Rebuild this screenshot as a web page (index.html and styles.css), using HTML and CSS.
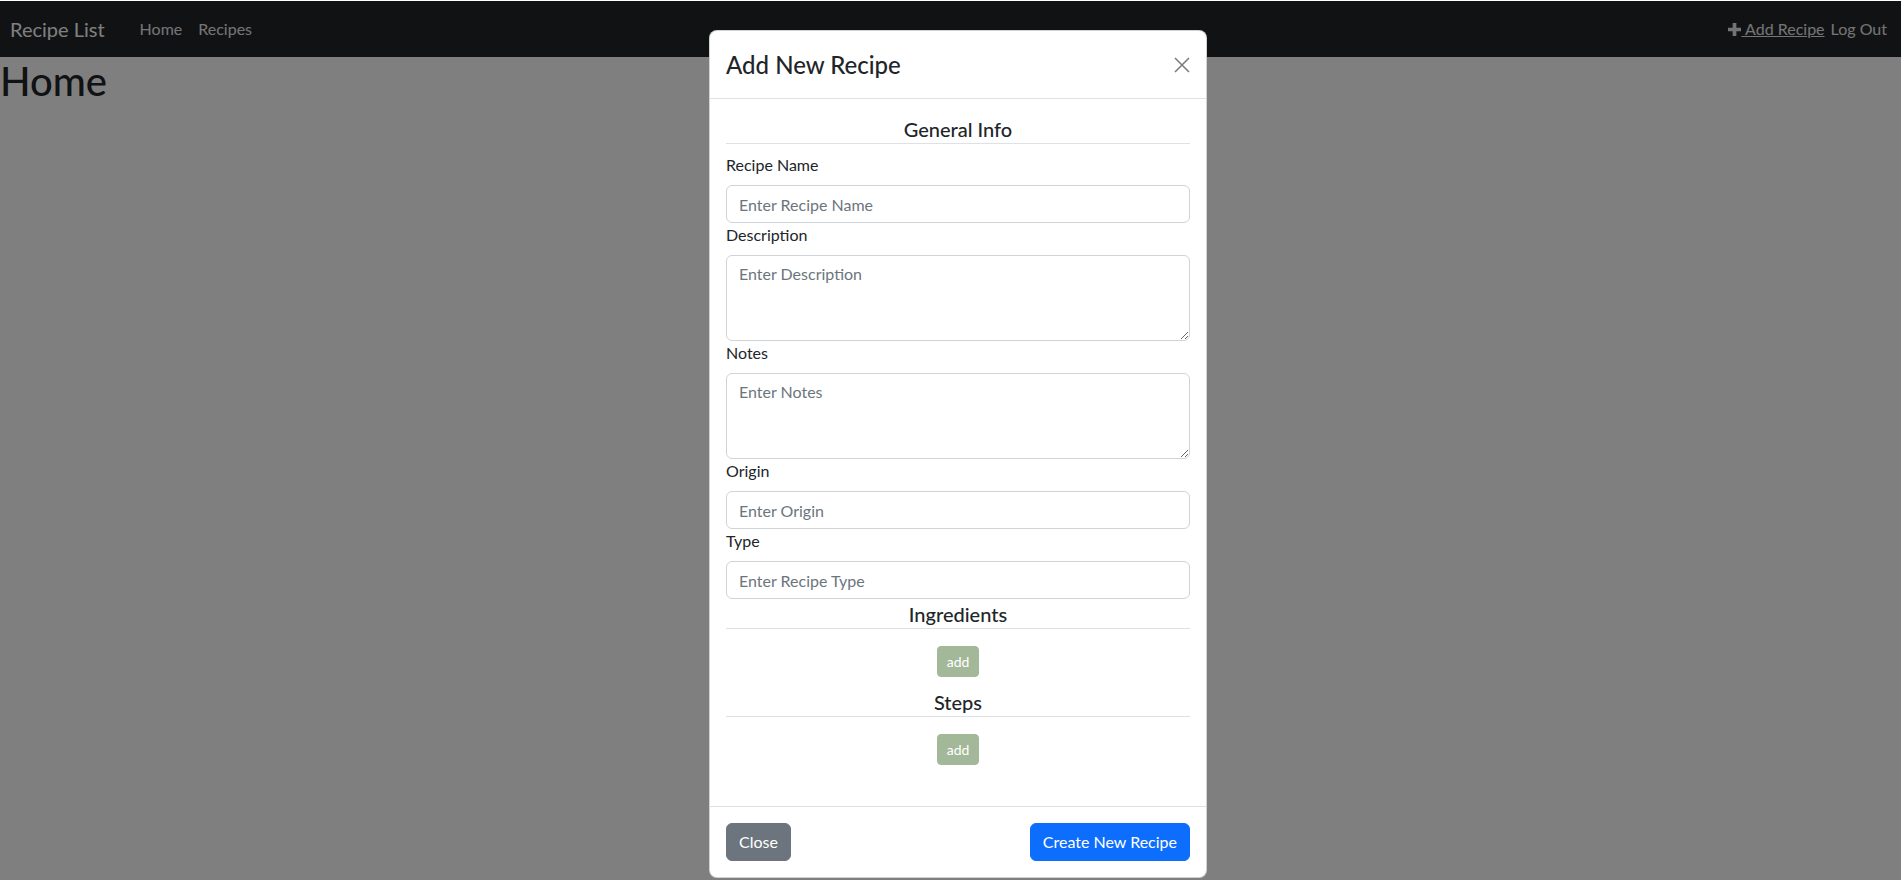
FILE: index.html
```html
<!DOCTYPE html>
<html lang="en">
<head>
<meta charset="utf-8">
<title>Recipe List</title>
<link rel="stylesheet" href="styles.css">
</head>
<body>
<div class="viewport">
  <nav class="navbar">
    <div class="nav-left">
      <a class="brand" href="#">Recipe List</a>
      <ul class="nav-links">
        <li><a class="nav-link" href="#">Home</a></li>
        <li><a class="nav-link" href="#">Recipes</a></li>
      </ul>
    </div>
    <div class="nav-right">
      <a class="add-link" href="#"><svg class="plus" viewBox="0 0 14 14" width="13" height="13"><path d="M5 0h4v5h5v4H9v5H5V9H0V5h5z" fill="currentColor"/></svg> Add Recipe</a>
      <a class="logout" href="#">Log Out</a>
    </div>
  </nav>
  <main class="main">
    <h1 class="page-title">Home</h1>
  </main>

  <div class="backdrop"></div>

  <div class="modal">
    <div class="modal-header">
      <h5 class="modal-title">Add New Recipe</h5>
      <button class="btn-close" type="button" aria-label="Close">
        <svg viewBox="0 0 16 16" width="16" height="16"><path d="M1 1L15 15M15 1L1 15" stroke="currentColor" stroke-width="1.6" fill="none"/></svg>
      </button>
    </div>
    <div class="modal-body">
      <h5 class="section-title first">General Info</h5>
      <label class="form-label">Recipe Name</label>
      <input class="form-control" type="text" placeholder="Enter Recipe Name">
      <label class="form-label">Description</label>
      <textarea class="form-control area" placeholder="Enter Description"></textarea>
      <label class="form-label">Notes</label>
      <textarea class="form-control area" placeholder="Enter Notes"></textarea>
      <label class="form-label">Origin</label>
      <input class="form-control" type="text" placeholder="Enter Origin">
      <label class="form-label">Type</label>
      <input class="form-control last" type="text" placeholder="Enter Recipe Type">

      <h5 class="section-title">Ingredients</h5>
      <div class="add-row"><button class="btn-add" type="button">add</button></div>

      <h5 class="section-title">Steps</h5>
      <div class="add-row"><button class="btn-add" type="button">add</button></div>
    </div>
    <div class="modal-footer">
      <button class="btn btn-secondary" type="button">Close</button>
      <button class="btn btn-primary" type="button">Create New Recipe</button>
    </div>
  </div>
</div>
</body>
</html>
```

FILE: styles.css
```css
* { box-sizing: border-box; }

html {
  background: #ffffff;
}

body {
  margin: 0;
  font-family: "Lato", "Noto Sans", sans-serif;
  font-size: 16px;
  line-height: 1.5;
  color: #212529;
  overflow: hidden;
}

.viewport {
  position: relative;
  margin: 1px 3px 0 0;
  height: 879px;
  background: #ffffff;
  overflow: hidden;
}

/* Navbar */
.navbar {
  height: 56px;
  background: #212529;
  display: flex;
  align-items: center;
  justify-content: space-between;
  padding: 0 14px 0 10px;
}

.nav-left {
  display: flex;
  align-items: center;
}

.brand {
  font-size: 20px;
  line-height: 30px;
  color: #ffffff;
  text-decoration: none;
  margin-right: 27px;
}

.nav-links {
  display: flex;
  list-style: none;
  margin: 0;
  padding: 0;
}

.nav-link {
  display: block;
  padding: 8px;
  color: #e9e9e9;
  text-decoration: none;
}

.nav-right {
  display: flex;
  align-items: center;
  gap: 6px;
}

.add-link {
  color: #e9e9e9;
  text-decoration: underline;
  display: inline-flex;
  align-items: center;
  white-space: pre;
}

.plus {
  display: block;
}

.logout {
  color: #e9e9e9;
  text-decoration: none;
}

/* Page */
.main {
  padding: 0;
}

.page-title {
  margin: 0;
  font-size: 40px;
  line-height: 48px;
  font-weight: 500;
  color: #212529;
}

.backdrop {
  position: absolute;
  inset: 0;
  background: rgba(0, 0, 0, 0.5);
}

/* Modal */
.modal {
  position: absolute;
  top: 29px;
  left: 709px;
  width: 498px;
  background: #ffffff;
  border: 1px solid rgba(0, 0, 0, 0.175);
  border-radius: 8px;
}

.modal-header {
  display: flex;
  align-items: center;
  justify-content: space-between;
  padding: 16px;
  border-bottom: 1px solid #dee2e6;
}

.modal-title {
  margin: 0;
  font-size: 24px;
  line-height: 35px;
  font-weight: 500;
}

.btn-close {
  border: 0;
  background: transparent;
  padding: 0;
  width: 16px;
  height: 16px;
  color: #000;
  opacity: 0.5;
  cursor: pointer;
}

.btn-close svg {
  display: block;
}

.modal-body {
  padding: 16px 16px 30px;
  display: flex;
  flex-direction: column;
}

.section-title {
  margin: 0;
  font-size: 20px;
  line-height: 28px;
  font-weight: 500;
  text-align: center;
  border-bottom: 1px solid #dee2e6;
}

.section-title.first {
  margin-bottom: 9px;
}

.form-label {
  display: block;
  line-height: 24px;
  margin-bottom: 8px;
}

.form-control {
  display: block;
  width: 100%;
  height: 38px;
  padding: 6px 12px;
  font-family: inherit;
  font-size: 16px;
  line-height: 24px;
  color: #212529;
  background: #fff;
  border: 1px solid #ced4da;
  border-radius: 6px;
  margin: 0;
}

.form-control.last {
  margin-bottom: 1px;
}

.form-control::placeholder {
  color: #6c757d;
  opacity: 1;
}

.form-control.area {
  height: 86px;
  resize: vertical;
}

.add-row {
  display: flex;
  justify-content: center;
  padding: 17px 0 11px;
}

.btn-add {
  height: 31px;
  min-width: 42px;
  padding: 4px 8px;
  font-family: inherit;
  font-size: 14px;
  line-height: 21px;
  color: #fff;
  background: #a3b899;
  border: 1px solid #a3b899;
  border-radius: 4px;
}

.modal-footer {
  display: flex;
  justify-content: space-between;
  align-items: center;
  padding: 12px;
  border-top: 1px solid #dee2e6;
}

.btn {
  margin: 4px;
  height: 38px;
  padding: 6px 12px;
  font-family: inherit;
  font-size: 16px;
  line-height: 24px;
  color: #fff;
  border: 1px solid transparent;
  border-radius: 6px;
}

.btn-secondary {
  background: #6c757d;
  border-color: #6c757d;
}

.btn-primary {
  background: #0d6efd;
  border-color: #0d6efd;
}
```
